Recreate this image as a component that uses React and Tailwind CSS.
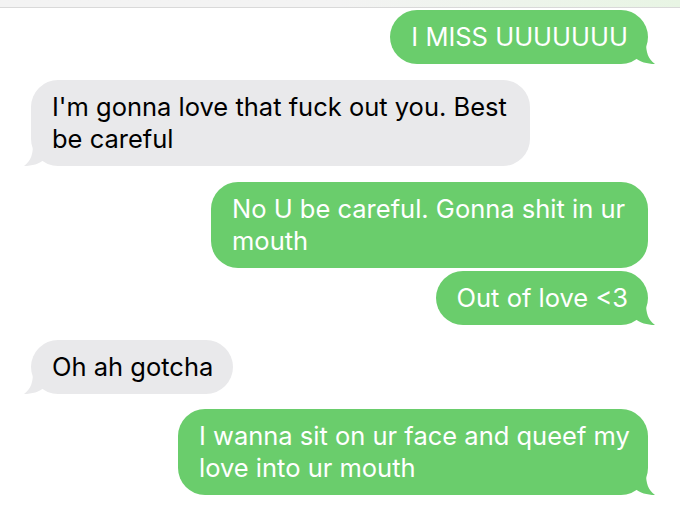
import React from 'react';

const messages = [
  { from: 'me', lines: ['I MISS UUUUUUU'], tail: true, gap: 'mt-[2px]' },
  { from: 'them', lines: ["I'm gonna love that fuck out you. Best", 'be careful'], tail: true, width: 'w-[499px]' },
  { from: 'me', lines: ['No U be careful. Gonna shit in ur', 'mouth'], tail: false, width: 'w-[437px]' },
  { from: 'me', lines: ['Out of love <3'], tail: true, gap: 'mt-[3px]' },
  { from: 'them', lines: ['Oh ah gotcha'], tail: true, gap: 'mt-[15px]' },
  { from: 'me', lines: ['I wanna sit on ur face and queef my', 'love into ur mouth'], tail: true, width: 'w-[470px]', gap: 'mt-[15px]' },
];

const Tail = ({ side, color }) => (
  <svg
    className={
      side === 'me'
        ? 'absolute -right-[8px] bottom-0 w-[22px] h-[22px]'
        : 'absolute -left-[8px] bottom-0 w-[22px] h-[22px] -scale-x-100'
    }
    viewBox="0 0 22 22"
  >
    <path d="M0 0 L12 0 C12 10 14 17 21 22 C13 22 6 20 0 15 Z" fill={color} />
  </svg>
);

const Bubble = ({ msg }) => {
  const me = msg.from === 'me';
  return (
    <div className={`flex ${me ? 'justify-end pr-[32px]' : 'justify-start pl-[31px]'} ${msg.gap || 'mt-[16px]'}`}>
      <div
        className={`relative rounded-[27px] pl-[21px] pr-[20px] py-[11px] text-[25.5px] leading-[32px] ${
          me ? 'bg-[#6acd6c] text-white' : 'bg-[#e9e9eb] text-black'
        } ${msg.width || ''}`}
      >
        {msg.tail && <Tail side={msg.from} color={me ? '#6acd6c' : '#e9e9eb'} />}
        {msg.lines.map((line, i) => (
          <span key={i} className="relative block whitespace-nowrap">
            {line}
          </span>
        ))}
      </div>
    </div>
  );
};

const App = () => {
  return (
    <div className="w-[680px] h-[532px] bg-white overflow-hidden font-['Inter','Liberation_Sans',sans-serif]">
      <div className="h-[8px] bg-gradient-to-r from-[#f3f3f3] via-[#f3f3f3] to-[#e8f5e4] border-b border-[#d9d9d9]" />
      {messages.map((m, i) => (
        <Bubble key={i} msg={m} />
      ))}
    </div>
  );
};

export default App;
